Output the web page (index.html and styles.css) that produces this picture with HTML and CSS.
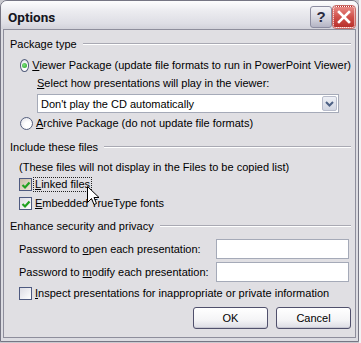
FILE: index.html
```html
<!DOCTYPE html>
<html>
<head>
<meta charset="utf-8">
<link rel="stylesheet" href="styles.css">
</head>
<body>
<div class="window">
  <div class="titlebar">
    <span class="title">Options</span>
    <div class="tbtns">
      <span class="tb help">?</span>
      <span class="tb close"><svg width="14" height="14" viewBox="0 0 14 14"><path d="M2 2 L12 12 M12 2 L2 12" stroke="#fff" stroke-width="2.6" stroke-linecap="square"/></svg></span>
    </div>
  </div>
  <div class="client">
    <div class="group-h g1"><span>Package type</span><i></i></div>
    <div class="row opt r-viewer"><span class="radio on"></span><span class="lbl"><u>V</u>iewer Package (update file formats to run in PowerPoint Viewer)</span></div>
    <div class="row sub r-select"><u>S</u>elect how presentations will play in the viewer:</div>
    <div class="combo"><span class="combo-text">Don't play the CD automatically</span><span class="arrow"><svg width="9" height="6" viewBox="0 0 9 6"><path d="M1 1 L4.5 4.5 L8 1" fill="none" stroke="#4d6185" stroke-width="2"/></svg></span></div>
    <div class="row opt r-archive"><span class="radio"></span><span class="lbl"><u>A</u>rchive Package (do not update file formats)</span></div>

    <div class="group-h g2"><span>Include these files</span><i></i></div>
    <div class="row ind r-note">(These files will not display in the Files to be copied list)</div>
    <div class="row ind chk r-linked"><span class="check hot"><svg width="10" height="10" viewBox="0 0 10 10"><path d="M1.5 5 L4 7.5 L8.5 2.5" fill="none" stroke="#21a121" stroke-width="2.2"/></svg></span><span class="lbl focus"><u>L</u>inked files</span></div>
    <div class="row ind chk r-embed"><span class="check"><svg width="10" height="10" viewBox="0 0 10 10"><path d="M1.5 5 L4 7.5 L8.5 2.5" fill="none" stroke="#21a121" stroke-width="2.2"/></svg></span><span class="lbl"><u>E</u>mbedded TrueType fonts</span></div>

    <div class="group-h g3"><span>Enhance security and privacy</span><i></i></div>
    <div class="row ind pw r-pw1"><span class="pwl">Password to <u>o</u>pen each presentation:</span><span class="input"></span></div>
    <div class="row ind pw r-pw2"><span class="pwl">Password to <u>m</u>odify each presentation:</span><span class="input"></span></div>
    <div class="row ind chk r-inspect"><span class="check"></span><span class="lbl"><u>I</u>nspect presentations for inappropriate or private information</span></div>

    <div class="buttons">
      <span class="btn">OK</span>
      <span class="btn">Cancel</span>
    </div>
  </div>
  <svg class="cursor" width="13" height="21" viewBox="0 0 13 21"><path d="M0.5 0.5 L0.5 16.5 L4.5 12.5 L7 18.5 L9.5 17.5 L7 11.5 L12 11.5 Z" fill="#fff" stroke="#000" stroke-width="1"/></svg>
</div>
</body>
</html>
```

FILE: styles.css
```css
html, body {
  margin: 0;
  padding: 0;
}
body {
  width: 361px;
  height: 343px;
  background: linear-gradient(90deg, #c9c9cf 359px, #f2f2f4 359px);
  font-family: "Liberation Sans", Arial, sans-serif;
  font-size: 11px;
  color: #000;
  overflow: hidden;
}
.window {
  position: relative;
  width: 359px;
  height: 342px;
  box-sizing: border-box;
  border: 1px solid #767684;
  border-radius: 7px 7px 0 0;
  background: #dcdce2;
  padding: 0 2px 3px 2px;
  display: flex;
  flex-direction: column;
}
.titlebar {
  height: 28px;
  flex: none;
  display: flex;
  align-items: center;
  justify-content: space-between;
  padding: 0 1px 0 5px;
  margin: 0 -2px;
  border-radius: 6px 6px 0 0;
  background: linear-gradient(#fdfdfe, #ececf0 35%, #dedee5 80%, #d2d2da);
}
.title {
  font-family: Roboto, "Liberation Sans", sans-serif;
  font-weight: bold;
  font-size: 13.5px;
  color: #151520;
  margin-top: 4px;
  margin-left: 2px;
}
.tbtns {
  display: flex;
  gap: 1px;
  margin-top: 3px;
  margin-right: 2px;
}
.tb {
  width: 20px;
  height: 20px;
  border: 1px solid #fff;
  border-radius: 3px;
  display: flex;
  align-items: center;
  justify-content: center;
}
.help {
  background: linear-gradient(#f4f4f8, #d2d2dc 60%, #b4b4c4);
  border-color: #8c8ca0;
  font-weight: bold;
  font-size: 15px;
  color: #2a2a40;
}
.close {
  background: linear-gradient(#e98a85, #d0504a 50%, #b8302c);
  border: 1px dotted #fff;
  outline: 1px solid #c86a66;
}
.client {
  flex: 1;
  background: #e0dfe3;
  border: 1px solid #8e8e9c;
  padding: 0 4px 0 5px;
  display: flex;
  flex-direction: column;
}
.group-h {
  height: 13px;
  line-height: 13px;
  display: flex;
  align-items: center;
  padding-left: 1px;
}
.group-h i {
  flex: 1;
  height: 0;
  border-top: 1px solid #a9a9b3;
  border-bottom: 1px solid #fff;
  margin-left: 6px;
  margin-top: -1px;
}
.g1 { margin-top: 8px; }
.g2 { margin-top: 11px; }
.g3 { margin-top: 9px; }
.row {
  display: flex;
  align-items: center;
  line-height: 13px;
  height: 13px;
  white-space: nowrap;
}
.opt { padding-left: 11px; }
.opt .lbl { margin-left: 3px; }
.r-viewer { margin-top: 8px; }
.r-select { margin-top: 5px; padding-left: 28px; }
.combo {
  margin-top: 4px;
  margin-left: 28px;
  width: 302px;
  height: 19px;
  box-sizing: border-box;
  background: #fff;
  border: 1px solid #a5aab8;
  display: flex;
  align-items: center;
  justify-content: space-between;
  padding: 0 1px 0 3px;
}
.arrow {
  width: 15px;
  height: 15px;
  box-sizing: border-box;
  border: 1px solid #b8bccb;
  border-radius: 2px;
  background: linear-gradient(#eef0f6, #d2d6e2);
  display: flex;
  align-items: center;
  justify-content: center;
}
.r-archive { margin-top: 4px; }
.radio {
  width: 13px;
  height: 13px;
  box-sizing: border-box;
  border-radius: 50%;
  border: 1px solid #55607e;
  background: radial-gradient(circle at 65% 65%, #fff 30%, #dedee6 100%);
  display: flex;
  align-items: center;
  justify-content: center;
}
.radio.on::after {
  content: "";
  width: 5px;
  height: 5px;
  border-radius: 50%;
  background: radial-gradient(circle at 40% 40%, #7ee07e, #21a121);
}
.ind { padding-left: 10px; }
.r-note { margin-top: 7px; }
.chk { height: 15px; }
.check {
  width: 13px;
  height: 13px;
  box-sizing: border-box;
  border: 1px solid #4e5a80;
  background: linear-gradient(135deg, #dcdce4, #fff);
  display: flex;
  align-items: center;
  justify-content: center;
}
.check.hot {
  background: linear-gradient(135deg, #c8bca8, #eee6d6);
}
.chk .lbl {
  margin-left: 2px;
  padding: 0 1px;
  line-height: 13px;
}
.focus {
  outline: 1px dotted #222;
}
.r-linked { margin-top: 3px; }
.r-embed { margin-top: 4px; }
.pw { height: 20px; justify-content: space-between; padding-right: 2px; }
.r-pw1 { margin-top: 6px; }
.r-pw2 { margin-top: 3px; }
.input {
  width: 133px;
  height: 20px;
  box-sizing: border-box;
  background: #fff;
  border: 1px solid #a5aab8;
}
.r-inspect { margin-top: 4px; }
.buttons {
  margin-top: 6px;
  display: flex;
  justify-content: flex-end;
  gap: 8px;
}
.btn {
  width: 75px;
  height: 22px;
  box-sizing: border-box;
  border: 1px solid #50506c;
  border-radius: 3px;
  background: linear-gradient(#ffffff, #f4f4f6 60%, #dcdce4);
  box-shadow: inset 0 -1px 0 #c8c8d2;
  display: flex;
  align-items: center;
  justify-content: center;
}
.cursor {
  position: absolute;
  left: 86px;
  top: 185px;
}
```
